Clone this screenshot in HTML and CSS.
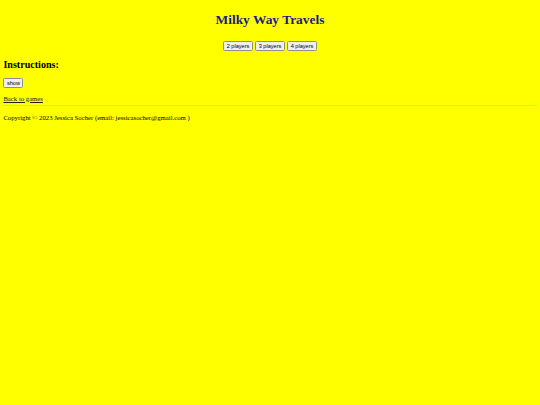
FILE: index.html
```html
<!DOCTYPE html>
<html>
<head>
<meta charset="utf-8">
<link rel="stylesheet" href="styles.css">
</head>
<body class="page">
<h1 class="title">Milky Way Travels</h1>
<div class="players">
  <button class="btn">2 players</button>
  <button class="btn">3 players</button>
  <button class="btn">4 players</button>
</div>
<h2 class="instr">Instructions:</h2>
<button class="btn">show</button>
<p class="back"><a class="link" href="#">Back to games</a></p>
<hr class="rule">
<p class="copy">Copyright © 2023 Jessica Socher (email: jessicasocher@gmail.com )</p>
</body>
</html>
```
FILE: styles.css
```css
html {
  background: #ffff00;
}
.page {
  margin: 3.4px;
  font-family: "Liberation Serif", "Times New Roman", serif;
  font-size: 6.72px;
  color: #000;
  background: #ffff00;
}
.title {
  text-align: center;
  color: #1a1a8f;
  font-size: 13.44px;
  margin: 8.8px 0 13px;
}
.players {
  text-align: center;
}
.btn {
  font-family: "Liberation Sans", Arial, sans-serif;
  font-size: 5.6px;
  padding: 1px 2.5px;
  margin: 0;
  background: #efefef;
  border: 1px solid #8f8f8f;
  border-radius: 1.5px;
  color: #000;
}
.players .btn {
  margin: 0 0.3px;
}
.instr {
  font-size: 10.08px;
  margin: 7.4px 0 8.4px;
}
.back {
  margin: 6.7px 0 3.5px;
}
.link {
  color: #222;
}
.rule {
  margin: 3.4px 0;
  border: 0;
  border-top: 1px solid #d8d8a0;
}
.copy {
  margin: 7.5px 0;
}
```
